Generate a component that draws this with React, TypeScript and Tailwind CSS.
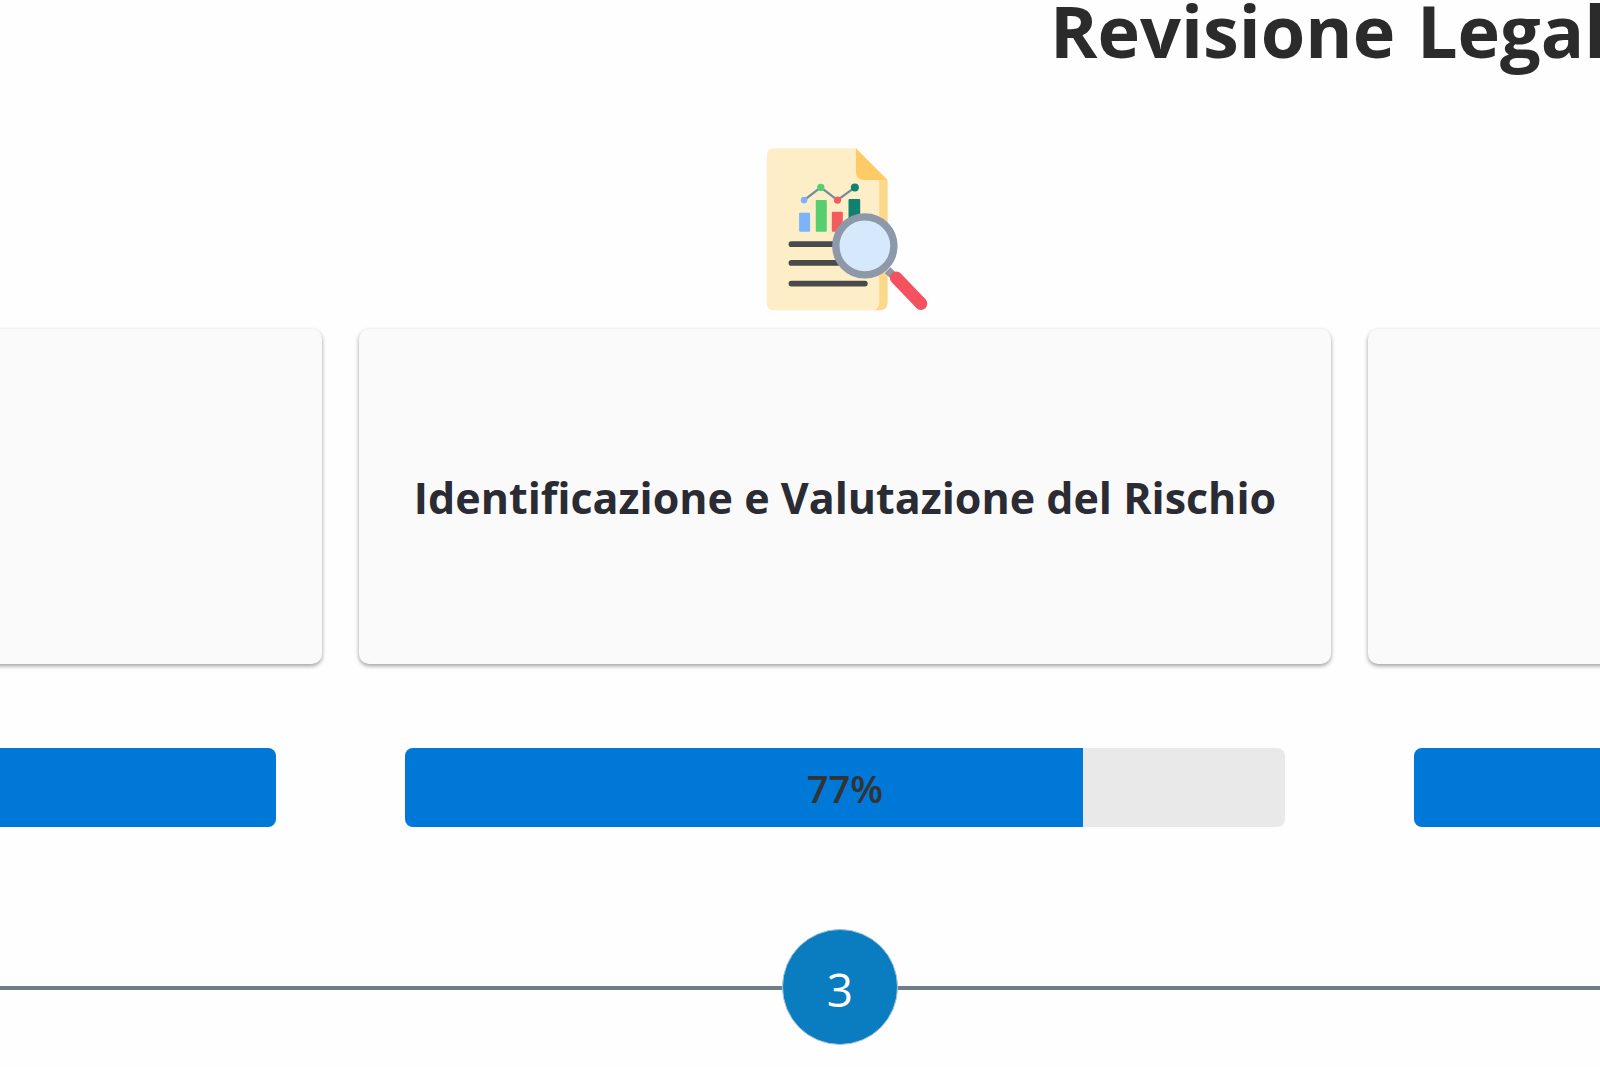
const font = "font-['Open_Sans','Noto_Sans',sans-serif]";

function ReportIcon() {
  return (
    <svg viewBox="64 54 500 500" className="h-[167px] w-[167px] blur-[0.5px]">
      <path d="M100 55H345L440 150V515Q440 540 415 540H100Q78 540 78 518V77Q78 55 100 55Z" fill="#fdeec8" />
      <path d="M415 150H440V515Q440 540 415 540H400Q415 535 415 515Z" fill="#fcd98a" />
      <path d="M345 55L440 150H370Q345 150 345 125Z" fill="#fccb66" />
      <rect x="175" y="248" width="33" height="57" rx="3" fill="#7db3fb" />
      <rect x="225" y="210" width="33" height="95" rx="3" fill="#58cf6f" />
      <rect x="273" y="245" width="33" height="60" rx="3" fill="#f25c5c" />
      <rect x="323" y="207" width="35" height="70" rx="3" fill="#0f8172" />
      <path d="M190 210L240 172L290 210L342 172" fill="none" stroke="#6f8f99" strokeWidth="7" />
      <circle cx="190" cy="210" r="10" fill="#7db3fb" />
      <circle cx="240" cy="172" r="11" fill="#58cf6f" />
      <circle cx="290" cy="210" r="11" fill="#f25c5c" />
      <circle cx="342" cy="172" r="12" fill="#0f8172" />
      <path d="M152 342H290M152 398H290M152 460H372" stroke="#4a4a4a" strokeWidth="17" strokeLinecap="round" />
      <path d="M440 420L470 448" stroke="#8d99a8" strokeWidth="24" />
      <path d="M466 443L540 520" stroke="#f4525f" strokeWidth="38" strokeLinecap="round" />
      <circle cx="372" cy="347" r="87" fill="#d6e8fb" stroke="#8d99a8" strokeWidth="22" />
    </svg>
  );
}

function Step({ title, percent, icon }: { title?: string; percent: number; icon?: boolean }) {
  return (
    <div className="flex w-[972px] shrink-0 flex-col">
      <div className="flex h-[181px] justify-center">{icon && <ReportIcon />}</div>
      <div className="flex h-[335px] items-center justify-center rounded-[10px] bg-[#fafafa] shadow-[0_2px_4px_rgba(0,0,0,0.38)]">
        {title && <span className="pt-1 text-[43px] font-bold text-[#2b2b33]">{title}</span>}
      </div>
      <div className="mx-[46px] mt-[84px] h-[79px] overflow-hidden rounded-[8px] bg-[#e9e9e9]">
        <div className="relative h-full">
          <div className="h-full bg-[#0078d7]" style={{ width: `${percent}%` }} />
          {percent < 100 && (
            <span className="absolute inset-0 flex items-center justify-center pt-px text-[38px] font-semibold text-[#333]">
              {percent}%
            </span>
          )}
        </div>
      </div>
    </div>
  );
}

export default function App() {
  return (
    <div className={`${font} h-[1067px] w-[1600px] overflow-hidden bg-[#fefefe]`}>
      <h1 className="h-[148px] whitespace-nowrap pl-[1050px] text-[72px] font-bold leading-[60px] text-[#2b2b2b] [word-spacing:3px]">
        Revisione Legale
      </h1>
      <div className="ml-[-650px] flex gap-[37px]">
        <Step percent={100} />
        <Step title="Identificazione e Valutazione del Rischio" percent={77} icon />
        <Step percent={100} />
      </div>
      <div className="mt-[102px] flex items-center">
        <div className="mt-px h-1 w-[782px] bg-[#6c7f87]" />
        <div className="flex h-[116px] w-[116px] shrink-0 items-center justify-center rounded-full border border-[#a9c4d4] bg-[#0a7dc1] pt-1 text-[46px] text-white">
          3
        </div>
        <div className="mt-px h-1 flex-1 bg-[#6c7f87]" />
      </div>
    </div>
  );
}
